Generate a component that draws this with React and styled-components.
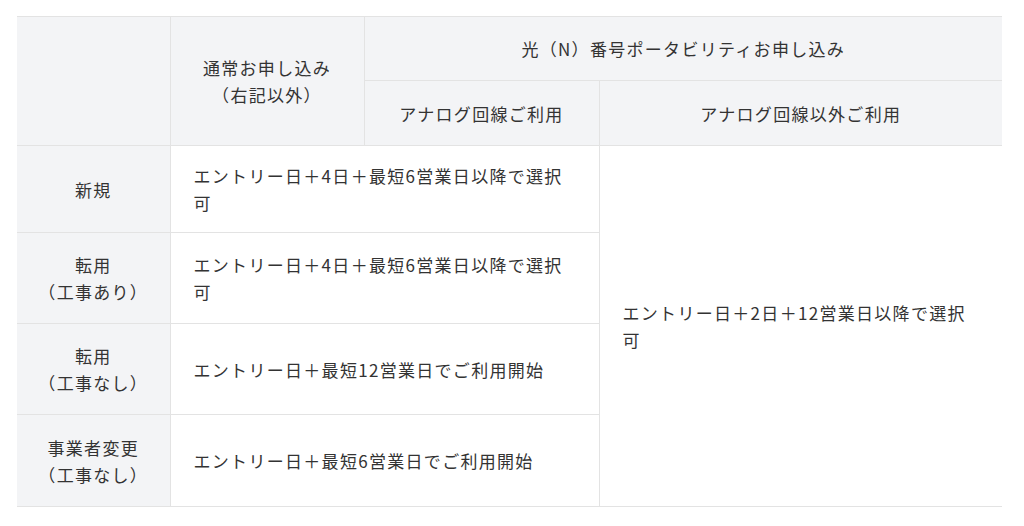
import styled, { createGlobalStyle } from "styled-components";

const GlobalStyle = createGlobalStyle`
  html, body {
    margin: 0;
    padding: 0;
    background: #ffffff;
  }
  body {
    font-family: "Noto Sans CJK JP", "Noto Sans", sans-serif;
    color: #333333;
  }
`;

const rows = [
  { label: ["新規"], text: "エントリー日＋4日＋最短6営業日以降で選択可", height: 87 },
  { label: ["転用", "（工事あり）"], text: "エントリー日＋4日＋最短6営業日以降で選択可", height: 91 },
  { label: ["転用", "（工事なし）"], text: "エントリー日＋最短12営業日でご利用開始", height: 91 },
  { label: ["事業者変更", "（工事なし）"], text: "エントリー日＋最短6営業日でご利用開始", height: 92 },
];

const App = () => {
  return (
    <>
      <GlobalStyle />
      <Wrapper>
        <Table>
          <colgroup>
            <col style={{ width: 153 }} />
            <col style={{ width: 194 }} />
            <col style={{ width: 235 }} />
            <col style={{ width: 403 }} />
          </colgroup>
          <thead>
            <Row height={64}>
              <HeadCell rowSpan={2} />
              <HeadCell rowSpan={2}>
                通常お申し込み
                <br />
                （右記以外）
              </HeadCell>
              <HeadCell colSpan={2}>光（N）番号ポータビリティお申し込み</HeadCell>
            </Row>
            <Row height={65}>
              <HeadCell>アナログ回線ご利用</HeadCell>
              <HeadCell>アナログ回線以外ご利用</HeadCell>
            </Row>
          </thead>
          <tbody>
            {rows.map((row, i) => (
              <Row key={i} height={row.height}>
                <RowHead>
                  {row.label.map((l, j) => (
                    <span key={j}>
                      {j > 0 && <br />}
                      {l}
                    </span>
                  ))}
                </RowHead>
                <Cell colSpan={2}>{row.text}</Cell>
                {i === 0 && (
                  <Cell rowSpan={4}>エントリー日＋2日＋12営業日以降で選択可</Cell>
                )}
              </Row>
            ))}
          </tbody>
        </Table>
      </Wrapper>
    </>
  );
};

const Wrapper = styled.div`
  padding: 16px 0 0 17px;
`;

const Table = styled.table`
  width: 985px;
  table-layout: fixed;
  border-collapse: collapse;
  font-size: 17px;
  line-height: 27px;
  letter-spacing: 1.3px;
  border-top: 1px solid #e3e3e3;
  border-bottom: 1px solid #e3e3e3;
`;

const Row = styled.tr`
  height: ${(props) => props.height}px;
`;

const HeadCell = styled.th`
  background: #f3f4f6;
  font-weight: 400;
  text-align: center;
  vertical-align: middle;
  padding: 0 8px;
  border: 1px solid #e3e3e3;

  &:first-child {
    border-left: none;
  }
  &:last-child {
    border-right: none;
  }
`;

const RowHead = styled.th`
  background: #f3f4f6;
  font-weight: 400;
  text-align: center;
  vertical-align: middle;
  padding: 0 4px;
  border: 1px solid #e3e3e3;
  border-left: none;
`;

const Cell = styled.td`
  text-align: left;
  vertical-align: middle;
  padding: 0 22px 0 23px;
  border: 1px solid #e3e3e3;

  &:last-child {
    border-right: none;
  }
`;

export default App;
